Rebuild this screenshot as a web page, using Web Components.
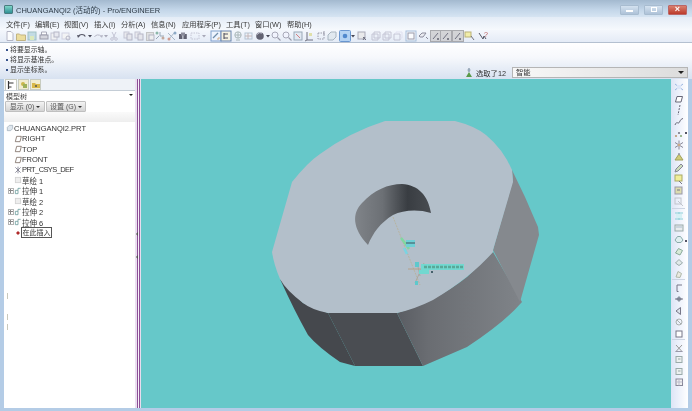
<!DOCTYPE html>
<html lang="zh">
<head>
<meta charset="utf-8">
<title>CHUANGANQI2 - Pro/ENGINEER</title>
<style>
html, body { margin: 0; height: 100%; overflow: hidden; background: #b9d1ea; }
body { font: 7.5px "Liberation Sans", "Noto Sans CJK SC", sans-serif; color: #333; }
</style>
</head>
<body>
<pe-window>
  <pe-titlebar slot="title">CHUANGANQI2 (活动的) - Pro/ENGINEER</pe-titlebar>
  <pe-menubar slot="menu" items="文件(F):29,编辑(E):29,视图(V):30,插入(I):27,分析(A):30,信息(N):31,应用程序(P):44,工具(T):29,窗口(W):32,帮助(H):30"></pe-menubar>
  <pe-toolbar slot="tools"></pe-toolbar>
  <pe-messages slot="messages">
    <div>将要显示轴。</div>
    <div>将显示基准点。</div>
    <div>显示坐标系。</div>
  </pe-messages>
  <pe-model-tree slot="tree"></pe-model-tree>
  <pe-viewport slot="view"></pe-viewport>
  <pe-side-toolbar slot="side"></pe-side-toolbar>
</pe-window>

<script>
// 12x12 toolbar glyphs, kept faint because the toolbar is mostly disabled
const ICONS = {
  file: '<path d="M3 1.5h4l2 2v7H3z" fill="#fff" stroke="#aab"/>',
  open: '<path d="M1.5 4h3l1 1h5v5.5h-9z" fill="#ecd98a" stroke="#b9a76a"/>',
  save: '<rect x="2" y="2" width="8" height="8" fill="#b9d6e0" stroke="#8fb5b8"/><rect x="4" y="6" width="4" height="4" fill="#d8e8b0"/>',
  print: '<path d="M3.5 2h5v3h-5z" fill="#fff" stroke="#99a"/><rect x="2" y="5" width="8" height="4" fill="#d0d0d8" stroke="#889"/>',
  doc2: '<rect x="2" y="3" width="6" height="7" fill="#f2f2f2" stroke="#bbc"/><rect x="5" y="2" width="5" height="5" fill="#e6e6ee" stroke="#aab"/>',
  doc3: '<rect x="2" y="3" width="7" height="6" fill="#f4f4f4" stroke="#ccd"/><circle cx="8" cy="8" r="2" fill="none" stroke="#aab"/>',
  undo: '<path d="M2.5 6.5a3.6 3 0 0 1 6.8 0" fill="none" stroke="#334" stroke-width="1.1"/><path d="M1 5l3 .5-2 2.5z" fill="#334"/>',
  redo: '<path d="M2.5 7a3.6 3 0 0 1 6.6 -.5" fill="none" stroke="#aab" stroke-width="1"/><path d="M11 5l-3 .5 2 2.5z" fill="#aab"/>',
  arrow: '<path d="M4 5h4L6 7.5z" fill="#223"/>',
  greyarrow: '<path d="M4 5h4L6 7.5z" fill="#99a"/>',
  cut: '<path d="M4 2l3 6M8 2L5 8" stroke="#bbc" fill="none"/><circle cx="4" cy="9" r="1.3" fill="none" stroke="#bbc"/><circle cx="8" cy="9" r="1.3" fill="none" stroke="#bbc"/>',
  copy: '<rect x="2" y="2" width="5" height="6" fill="#e8e8ec" stroke="#bbc"/><rect x="5" y="4" width="5" height="6" fill="#e4e4ea" stroke="#aab"/>',
  paste: '<rect x="2.5" y="2.5" width="7" height="8" fill="#ddd" stroke="#bbb"/><rect x="5" y="5" width="5" height="5" fill="#eee" stroke="#aab"/>',
  tree1: '<path d="M2 9l3-3M6 2v4l4 0" stroke="#89a" fill="none"/><circle cx="3" cy="3" r="1.5" fill="#7a9"/><circle cx="9" cy="8" r="1.5" fill="#b98"/>',
  tree2: '<path d="M2 3l7 7M9 2L3 9" stroke="#9ab" fill="none"/><circle cx="3" cy="9" r="1.5" fill="#c87"/><circle cx="9" cy="3" r="1.5" fill="#79b"/>',
  find: '<rect x="2" y="4" width="3.4" height="5" fill="#445"/><rect x="6.4" y="4" width="3.4" height="5" fill="#445"/><rect x="4" y="2.5" width="4" height="3" fill="#778"/>',
  dash: '<rect x="2" y="3" width="8" height="6" fill="none" stroke="#bbc" stroke-dasharray="1.5 1"/>',
  boxblue: '<rect x="1" y="1" width="10" height="10" fill="#eef4ff" stroke="#6a8fc4"/><path d="M3 8l5-5" stroke="#579" stroke-width="1.2"/><path d="M7 9h2V7" stroke="#c96" fill="none"/>',
  boxtree: '<rect x="1" y="1" width="10" height="10" fill="#f6f1dc" stroke="#4e6f9f"/><path d="M4 3v6M4 4h4M4 8h4" stroke="#334" stroke-width="1.1"/>',
  net: '<circle cx="6" cy="5" r="3.2" fill="none" stroke="#9aaaaa"/><path d="M3 5h6M6 2v6M4 10h4" stroke="#9aaaaa"/>',
  net2: '<rect x="2" y="3" width="7" height="6" fill="none" stroke="#abc"/><path d="M5 3v6M2 6h7" stroke="#baa"/>',
  sphere: '<circle cx="6" cy="6" r="3.8" fill="#445"/><path d="M3 4.5a4 4 0 0 1 5 -1.5" stroke="#ccd" fill="none"/>',
  zoomin: '<circle cx="5" cy="5" r="3" fill="#f2f4ff" stroke="#99a"/><path d="M7.5 7.5l3 3" stroke="#889" stroke-width="1.1"/>',
  zoombox: '<rect x="2" y="2" width="8" height="8" fill="#dfe8f2" stroke="#89a"/><path d="M4 4l4 4" stroke="#c66"/>',
  axes: '<path d="M4 2v8h6" stroke="#556" fill="none"/><path d="M4 10l-2 1" stroke="#556"/><rect x="6" y="3" width="3" height="3" fill="#dd9"/>',
  axes2: '<rect x="3" y="3" width="6" height="6" fill="none" stroke="#889" stroke-dasharray="1.5 1"/><path d="M9 1v4" stroke="#889"/>',
  solid: '<path d="M2 5l3-3h5v5l-3 3H2z" fill="#dfe7ee" stroke="#9aa8b4"/>',
  active: '<rect x=".5" y=".5" width="11" height="11" rx="1" fill="#a8ccf2" stroke="#4f84c8"/><circle cx="6" cy="6" r="2.3" fill="#2f72c4"/>',
  outline: '<rect x="2" y="2" width="7" height="7" fill="#e8e8e8" stroke="#99a"/><path d="M7 7l3 3M9 7l-2 3" stroke="#556"/>',
  wire: '<path d="M2 4h6v6H2zM4 2h6v6H4z" fill="none" stroke="#bbc"/>',
  hidden: '<path d="M2 4h6v6H2z" fill="none" stroke="#bbc"/><path d="M4 4V2h6v6H8" fill="none" stroke="#dde"/>',
  flat: '<rect x="1" y="1" width="10" height="10" fill="#f4f6fa" stroke="#98b4d4"/><rect x="3" y="3" width="6" height="6" fill="#fff" stroke="#889"/>',
  tag: '<path d="M1 6l3-3h4l-3 4H2zM8 7l2 2" stroke="#778" fill="#eaeaf0"/>',
  graybox: '<rect x=".5" y=".5" width="11" height="11" fill="#cdcdcf" stroke="#9a9a9e"/><path d="M3 9l5-6" stroke="#556"/><circle cx="8" cy="9" r="1" fill="#445"/>',
  help: '<path d="M2 3l4 6 1-3 2 3" stroke="#334" fill="none"/><text x="7" y="7" font-size="7" fill="#a33" font-family="Liberation Sans">?</text>',
  note: '<rect x="1" y="2" width="6" height="5" fill="#f2ec98" stroke="#b0a45a"/><path d="M7 6l3 4" stroke="#556"/>',
  // right hand column
  csys: '<path d="M2 9L10 3M2 3l8 6" stroke="#9ab6e0"/><rect x="4" y="4" width="4" height="4" fill="#dce6f8"/>',
  plane: '<path d="M2.5 9L4 3.5h5.5L8 9z" fill="#fff" stroke="#667"/>',
  axis: '<path d="M7 1L5 11" stroke="#667" stroke-dasharray="2 1.2"/>',
  curve: '<path d="M2 9c2-5 3 0 4.500-3s2-3 3.500-3.500" fill="none" stroke="#667"/>',
  points: '<circle cx="3" cy="9" r="1.1" fill="#b97"/><circle cx="6" cy="6" r="1.1" fill="#778"/><circle cx="8" cy="9" r="1.1" fill="#8a7"/>',
  star: '<path d="M6 1.500v9M2 3.500l8 5M10 3.500l-8 5" stroke="#889"/><circle cx="6" cy="6" r="1.300" fill="#ca8"/>',
  mount: '<path d="M2 10l4-6 4 6z" fill="#d0cc7a" stroke="#a0a05a"/><circle cx="6" cy="4" r="1.1" fill="#99a"/>',
  pencil: '<path d="M2 10l1-3 5-5 2 2-5 5z" fill="#cdb" stroke="#889"/>',
  sk1: '<rect x="2" y="2" width="7" height="6" fill="#f0ee9a" stroke="#aaaa65"/><path d="M6 8l3 3" stroke="#778"/>',
  sk2: '<rect x="2" y="2" width="7" height="7" fill="#dcdcb0" stroke="#99a"/><path d="M4 5h3" stroke="#778"/>',
  sk3: '<rect x="2" y="2" width="6" height="6" fill="none" stroke="#c0c4cc"/><path d="M5 5l5 5" stroke="#c0c4cc"/>',
  mirror: '<path d="M2 3h8M2 9h8M6 2v8" stroke="#8cd0d8"/><rect x="3" y="4" width="6" height="4" fill="#d5f0f4"/>',
  panel: '<rect x="2" y="3" width="8" height="6" fill="#e8ecee" stroke="#9aaaaa"/><path d="M3 5h6" stroke="#abc"/>',
  hex: '<path d="M2 7l2.500-3.500h3L10 7 8 9.500H4z" fill="#dfeef0" stroke="#8aaaaa"/>',
  pat1: '<path d="M2.500 8l3-4.500 4 2-2.500 4.500z" fill="#d8ead8" stroke="#8aaa9a"/>',
  pat2: '<path d="M2.500 7l3.500-3.500L9.500 7 6 9.500z" fill="#e2eaea" stroke="#9aaaaa"/>',
  pat3: '<path d="M3 9l2-5.500 3.500 2L7 9.500z" fill="#eaeae0" stroke="#b0b8aa"/>',
  bracket: '<path d="M4 9.500V3h5M4 9.500h1.500" fill="none" stroke="#778"/>',
  dia: '<path d="M6 3l3 3-3 3-3-3z" fill="#8a94a2"/><path d="M2 6h8" stroke="#778"/>',
  wedge: '<path d="M3 6l4.500-3.500v7z" fill="#dde4ec" stroke="#778"/>',
  loop: '<circle cx="6" cy="6" r="3" fill="none" stroke="#aab0b0"/><path d="M4 4l4 4" stroke="#aab0b0"/>',
  square: '<rect x="3" y="3" width="6" height="6" fill="#fff" stroke="#778"/>',
  x: '<path d="M3 3l6 6.500M9 3L3 9.500" stroke="#999"/><path d="M2.500 9.500h7" stroke="#99a"/>',
  cube: '<rect x="3" y="3.500" width="6" height="6" fill="#ecf0f0" stroke="#9aaaaa"/><path d="M5 6h2.500" stroke="#9aaaaa"/>',
  grid: '<rect x="3" y="3" width="6.500" height="6.500" fill="#f0f0f0" stroke="#889"/><path d="M3 6h6.500M6 3v6.500" stroke="#bbc"/>',
  // model tree
  tplane: '<path d="M2 10L4 2h7l-2 8z" fill="none" stroke="#7a6a60" stroke-width="1.2"/>',
  tcsys: '<path d="M2 2l8 8M10 2l-8 8M6 1v10" stroke="#778" stroke-width="1.2"/>',
  tsketch: '<rect x="2" y="2" width="8" height="8" fill="#eee" stroke="#d0d0d0" stroke-width="1.2"/>',
  textrude: '<path d="M2 10V5h4v5zM6 5V2h4" fill="none" stroke="#6a9a9a" stroke-width="1.2"/>',
  tinsert: '<path d="M6 3l3 3-3 3-3-3z" fill="#b02a2a"/>'
};

class PeIcon extends HTMLElement {
  connectedCallback() {
    const size = this.getAttribute('size') || 12;
    this.attachShadow({ mode: 'open' }).innerHTML = `
      <style>:host { display: block; width: ${size}px; height: ${size}px; flex: none; } svg { display: block; }</style>
      <svg width="${size}" height="${size}" viewBox="0 0 12 12">${ICONS[this.getAttribute('name')] || ''}</svg>`;
  }
}

class PeWindow extends HTMLElement {
  constructor() {
    super();
    this.attachShadow({ mode: 'open' }).innerHTML = `
      <style>
        :host { display: grid; width: 692px; height: 411px; box-sizing: border-box; padding-bottom: 3px; filter: blur(.35px);
          grid-template-rows: 17px 13px 13px 36px 329px; grid-template-columns: 4px 131px 6px 530px 17px 4px; background: #b4cce6; }
        ::slotted([slot=title]), ::slotted([slot=menu]), ::slotted([slot=tools]), ::slotted([slot=messages]) { grid-column: 1 / -1; }
        ::slotted([slot=tree]) { grid-column: 2; grid-row: 5; }
        ::slotted([slot=view]) { grid-column: 4; grid-row: 5; }
        ::slotted([slot=side]) { grid-column: 5; grid-row: 5; }
        .sash { grid-column: 3; grid-row: 5; position: relative;
          background: linear-gradient(90deg, #eadff0 0 2px, #8d4f97 2px 3px, #f8f2fa 3px 4px, #8d4f97 4px 5px, #e9dcee 5px); }
        .sash i { position: absolute; left: 1px; width: 0; height: 0; border: 2px solid transparent; border-right: 2px solid #555; border-left: 0; }
      </style>
      <slot name="title"></slot><slot name="menu"></slot><slot name="tools"></slot><slot name="messages"></slot>
      <slot name="tree"></slot>
      <div class="sash"><i style="top:153px"></i><i style="top:176px"></i></div>
      <slot name="view"></slot><slot name="side"></slot>`;
  }
}

class PeTitlebar extends HTMLElement {
  constructor() {
    super();
    this.attachShadow({ mode: 'open' }).innerHTML = `
      <style>
        :host { display: flex; align-items: center; height: 17px; box-sizing: border-box; padding: 2px 5px 0 4px; gap: 3px;
          background: linear-gradient(#a3b9cf, #c2d5e8 55%, #d6e4f2); font-size: 7.5px; color: #2d3a46; }
        .logo { width: 9px; height: 9px; border-radius: 1px; border: 1px solid #4a7c80; box-sizing: border-box; background: linear-gradient(#7fd6c8, #2e8f94); }
        .text { flex: 1; white-space: nowrap; }
        .btn { width: 19px; height: 10px; box-sizing: border-box; margin-left: 2px; display: flex; align-items: center; justify-content: center;
          border: 1px solid #a8bcd0; border-radius: 1px; background: linear-gradient(#d4e2f0, #aec2d8); }
        .btn b { display: block; }
        .min b { width: 7px; height: 2px; background: #fff; margin-top: 2px; }
        .max b { width: 6px; height: 5px; border: 1px solid #fff; box-sizing: border-box; }
        .close { background: linear-gradient(#d97f6e, #bb3a2a); border-color: #b66; color: #fff; font: bold 9px/1 "Liberation Sans", sans-serif; }
      </style>
      <span class="logo"></span><span class="text"><slot></slot></span>
      <span class="btn min"><b></b></span><span class="btn max"><b></b></span><span class="btn close">×</span>`;
  }
}

class PeMenubar extends HTMLElement {
  connectedCallback() {
    const items = this.getAttribute('items').split(',').map(s => s.split(':'));
    this.attachShadow({ mode: 'open' }).innerHTML = `
      <style>
        :host { display: flex; align-items: center; height: 13px; padding-left: 6px; box-sizing: border-box;
          background: linear-gradient(#e4ecf6, #f6f9fd); font-size: 7.3px; color: #3a3a3a; white-space: nowrap; }
      </style>
      ${items.map(([t, w]) => `<span style="width:${w}px">${t}</span>`).join('')}`;
  }
}

class PeToolbar extends HTMLElement {
  connectedCallback() {
    // icon name + centre x of the icon in the window
    const tools = [['file',10],['open',21],['save',32],['print',44],['doc2',55],['doc3',66],['undo',82],['arrow',90],['redo',98],['greyarrow',106],
      ['cut',114],['copy',128],['copy',139],['paste',150],['tree1',160],['tree2',172],['find',183],['dash',195],['greyarrow',204],['boxblue',216],
      ['boxtree',226],['net',238],['net2',249],['sphere',260],['arrow',268],['zoomin',276],['zoomin',287],['zoombox',298],['axes',309],['axes2',321],
      ['solid',332],['active',345],['arrow',353],['outline',362],['wire',376],['wire',387],['hidden',398],['flat',411],['tag',424],['graybox',436],
      ['graybox',446],['graybox',458],['note',470],['help',483]];
    let prev = 0;
    const html = tools.map(([name, x]) => {
      const gap = x - 6 - prev;
      prev = x + 6;
      return `<pe-icon name="${name}" style="margin-left:${gap}px"></pe-icon>`;
    }).join('');
    this.attachShadow({ mode: 'open' }).innerHTML = `
      <style>
        :host { display: flex; align-items: center; height: 13px; box-sizing: border-box; border-bottom: 1px solid #b4c0d0;
          background: linear-gradient(#f4f7fc, #e4ebf6); }
        .row { display: flex; opacity: .82; }
      </style>
      <div class="row">${html}</div>`;
  }
}

class PeMessages extends HTMLElement {
  constructor() {
    super();
    this.attachShadow({ mode: 'open' }).innerHTML = `
      <style>
        :host { display: flex; justify-content: space-between; height: 36px; box-sizing: border-box; padding: 1px 4px 1px 5px;
          background: linear-gradient(#fff, #f6f8fc 40%, #d8e2f1); font-size: 6.9px; color: #333; }
        .list { line-height: 10px; padding-top: 1px; }
        ::slotted(div) { padding-left: 5px; position: relative; }
        ::slotted(div)::before { content: ""; position: absolute; left: 1px; top: 4px; width: 2px; height: 2px; background: #36528a; }
        .select { align-self: flex-end; display: flex; align-items: center; gap: 3px; height: 11px; font-size: 7.3px; }
        .flag { width: 8px; height: 11px; }
        .count { width: 33px; white-space: nowrap; }
        .combo { width: 176px; height: 11px; box-sizing: border-box; border: 1px solid #b5b5b5; padding: 0 3px; line-height: 9px;
          background: linear-gradient(90deg, #f8f8f8, #dcdcdc); display: flex; justify-content: space-between; align-items: center; }
        .combo i { width: 0; height: 0; border: 3px solid transparent; border-top: 3px solid #222; border-bottom: 0; }
      </style>
      <div class="list"><slot></slot></div>
      <div class="select">
        <svg class="flag" viewBox="0 0 8 11"><path d="M4 1v4" stroke="#789"/><circle cx="4" cy="3" r="1.5" fill="#9ab"/><path d="M1 10l3-5 3 5z" fill="#5a9a4a"/></svg>
        <span class="count">选取了12</span>
        <span class="combo"><span>智能</span><i></i></span>
      </div>`;
  }
}

class PeTreeItem extends HTMLElement {
  connectedCallback() {
    const exp = this.hasAttribute('expand');
    const insert = this.hasAttribute('insert');
    this.attachShadow({ mode: 'open' }).innerHTML = `
      <style>
        :host { display: flex; align-items: center; height: 10.45px; padding-left: 4px; white-space: nowrap; font-size: 7.5px; color: #333; }
        .plus { width: 6px; height: 6px; box-sizing: border-box; border: 1px solid #b4b4b4; flex: none; position: relative; visibility: ${exp ? 'visible' : 'hidden'}; }
        .plus::before { content: ""; position: absolute; left: 0; top: 1px; width: 4px; height: 1px; background: #888; }
        .plus::after { content: ""; position: absolute; left: 1px; top: 0; width: 1px; height: 4px; background: #888; }
        .label { ${insert ? 'border: 1px solid #555; padding: 0 .5px; line-height: 9px; margin-left: -1px; font-size: 7px;' : ''} }
      </style>
      <span class="plus"></span>
      <pe-icon name="${this.getAttribute('icon')}" size="8"></pe-icon>
      <span class="label"><slot></slot></span>`;
  }
}

class PeModelTree extends HTMLElement {
  constructor() {
    super();
    this.attachShadow({ mode: 'open' }).innerHTML = `
      <style>
        :host { display: flex; flex-direction: column; background: #fff; font-size: 7.5px; color: #444; overflow: hidden; position: relative; }
        .tabs { display: flex; height: 12px; box-sizing: border-box; padding-left: 1px; gap: 1px; border-bottom: 1px solid #c4cdd6; background: #eef2f7; }
        .tab { width: 11px; height: 11px; background: #f1ecd0; border: 1px solid #c8ccc0; box-sizing: border-box; display: flex; align-items: center; justify-content: center; }
        .tab.on { background: #fff; border-bottom: 0; width: 12px; }
        .head { display: flex; justify-content: space-between; padding: 1px 2px 0 2px; height: 9px; line-height: 10px; font-size: 7px; }
        .head i { width: 0; height: 0; margin-top: 2px; border: 2px solid transparent; border-top: 2px solid #222; border-bottom: 0; }
        .btns { display: flex; gap: 1px; padding: 0 1px; height: 11px; }
        .b { width: 40px; box-sizing: border-box; border: 1px solid #c0c0c0; border-radius: 1px; background: linear-gradient(#f4f4f4, #d4d4d4);
          display: flex; align-items: center; justify-content: center; gap: 2px; font-size: 7px; color: #555; line-height: 9px; white-space: nowrap; }
        .b i { width: 0; height: 0; border: 2px solid transparent; border-top: 2px solid #333; border-bottom: 0; margin-top: 1px; }
        .strip { height: 10px; background: linear-gradient(#fafafa, #eeeeee); }
        .tree { padding-top: 1px; }
        .root { display: flex; align-items: center; height: 10.45px; padding-left: 2px; font-size: 7.5px; color: #333; }
        .marks i { position: absolute; left: 3px; width: 1px; background: #c8c8bc; }
      </style>
      <div class="tabs">
        <span class="tab on"><svg width="8" height="8" viewBox="0 0 8 8"><path d="M1.5 0v8M1.5 2h5M1.5 6h3" stroke="#333" stroke-width="1.2"/></svg></span>
        <span class="tab"><svg width="8" height="8" viewBox="0 0 8 8"><circle cx="3" cy="3" r="2" fill="#cbb84a"/><rect x="3" y="3" width="4" height="4" fill="#9db05a"/></svg></span>
        <span class="tab"><svg width="8" height="8" viewBox="0 0 8 8"><path d="M0 2h3l1 1h4v4H0z" fill="#d8b84a"/><circle cx="4" cy="5" r="1" fill="#555"/></svg></span>
      </div>
      <div class="head"><span>模型树</span><i></i></div>
      <div class="btns"><span class="b">显示 (0)<i></i></span><span class="b">设置 (G)<i></i></span></div>
      <div class="strip"></div>
      <div class="tree">
        <div class="root"><pe-icon name="solid" size="8"></pe-icon>CHUANGANQI2.PRT</div>
        <pe-tree-item icon="tplane">RIGHT</pe-tree-item>
        <pe-tree-item icon="tplane">TOP</pe-tree-item>
        <pe-tree-item icon="tplane">FRONT</pe-tree-item>
        <pe-tree-item icon="tcsys" style="letter-spacing:-.6px">PRT_CSYS_DEF</pe-tree-item>
        <pe-tree-item icon="tsketch">草绘 1</pe-tree-item>
        <pe-tree-item icon="textrude" expand>拉伸 1</pe-tree-item>
        <pe-tree-item icon="tsketch">草绘 2</pe-tree-item>
        <pe-tree-item icon="textrude" expand>拉伸 2</pe-tree-item>
        <pe-tree-item icon="textrude" expand>拉伸 6</pe-tree-item>
        <pe-tree-item icon="tinsert" insert>在此插入</pe-tree-item>
      </div>
      <div class="marks"><i style="top:214px;height:6px"></i><i style="top:235px;height:6px"></i><i style="top:245px;height:6px"></i></div>`;
  }
}

class PeViewport extends HTMLElement {
  constructor() {
    super();
    // coordinates below are window coordinates, the viewBox shifts them into the viewport
    this.attachShadow({ mode: 'open' }).innerHTML = `
      <style>:host { display: block; background: #66c8c9; overflow: hidden; } svg { display: block; }</style>
      <svg width="530" height="329" viewBox="141 79 530 329">
        <defs>
          <linearGradient id="side" gradientUnits="userSpaceOnUse" x1="398" y1="0" x2="520" y2="0">
            <stop offset="0" stop-color="#5a5d63"/><stop offset=".25" stop-color="#6a6d72"/><stop offset="1" stop-color="#7f8388"/>
          </linearGradient>
          <linearGradient id="bore" gradientUnits="userSpaceOnUse" x1="356" y1="0" x2="432" y2="0">
            <stop offset="0" stop-color="#7f8388"/><stop offset=".35" stop-color="#6c7075"/><stop offset=".68" stop-color="#393d42"/><stop offset="1" stop-color="#494d52"/>
          </linearGradient>
        </defs>
        <path d="M280 279L303 303L328 313L355 366L340 362Q318 347 308 335Q294 310 280 279Z" fill="#45484d"/>
        <path d="M328 313H397L423 366H355Z" fill="#4a4d52"/>
        <path d="M397 313Q435 302 467 277L493 252L522 302Q505 322 467 347L423 366Z" fill="url(#side)"/>
        <path d="M493 250L513 180L512 170L525 197L538 227L539 235L520 302Z" fill="#85898e"/>
        <path d="M385 121H455Q475 126 486 135Q503 149 512 170L513 182L493 250L493 252Q470 278 433 300Q415 309 397 313H328Q312 310 303 303Q286 290 280 279Q274 265 272 252L292 182Q308 162 320 154Q350 132 385 121Z" fill="#b3bfca"/>
        <path d="M368 245C352 228 352 213 362 203C374 190 388 184 402 184C418 185 428 195 431 213C418 209 403 210 393 215C380 223 373 233 368 245Z" fill="url(#bore)"/>
        <path d="M393 217L420 285" stroke="#b8b096" stroke-width=".8" stroke-dasharray="2 1"/>
        <path d="M401 238L405 243L409 249" stroke="#7fd8a0" stroke-width="2.5" fill="none"/>
        <rect x="406" y="240" width="9" height="7" fill="#6fd0d6"/>
        <path d="M406 243h9" stroke="#40505a"/>
        <path d="M404 248l3 6" stroke="#7ad4e2" stroke-width="2.5"/>
        <path d="M408 269h20" stroke="#b89a78" stroke-width=".8"/>
        <path d="M417 262L420 276M424 263L415 283" stroke="#a8a294" stroke-width=".8"/>
        <rect x="415" y="262" width="4" height="5" fill="#5ec8cc"/>
        <rect x="415" y="281" width="3" height="4" fill="#5ec8cc"/>
        <rect x="421" y="264" width="43" height="6" fill="#72d8d0"/>
        <rect x="419" y="270" width="10" height="4" fill="#72d8d0"/>
        <path d="M424 267h40" stroke="#5aa898" stroke-width="2.5" stroke-dasharray="3 1"/>
        <path d="M431 272h2" stroke="#44606a" stroke-width="2"/>
      </svg>`;
  }
}

class PeSideToolbar extends HTMLElement {
  connectedCallback() {
    const tools = ['csys','plane','axis','curve','points','star','mount','pencil','sk1','sk2','sk3','|','mirror','panel','hex','pat1','pat2','pat3','|','bracket','dia','wedge','loop','square','|','x','cube','cube','grid'];
    this.attachShadow({ mode: 'open' }).innerHTML = `
      <style>
        :host { display: flex; flex-direction: column; align-items: center; padding: 2px 2px 0 0; box-sizing: border-box;
          background: linear-gradient(90deg, #dde5f6, #eef2fb 50%, #fff); position: relative; }
        pe-icon { margin-bottom: -.5px; flex: none; }
        hr { width: 13px; margin: 0 0 1.5px; border: 0; border-top: 1px solid #ccd4e2; flex: none; }
        i { position: absolute; right: 1px; width: 2px; height: 2px; background: #556; }
      </style>
      ${tools.map(t => t === '|' ? '<hr>' : `<pe-icon name="${t}"></pe-icon>`).join('')}
      <i style="top:53px"></i><i style="top:161px"></i>`;
  }
}

customElements.define('pe-icon', PeIcon);
customElements.define('pe-window', PeWindow);
customElements.define('pe-titlebar', PeTitlebar);
customElements.define('pe-menubar', PeMenubar);
customElements.define('pe-toolbar', PeToolbar);
customElements.define('pe-messages', PeMessages);
customElements.define('pe-tree-item', PeTreeItem);
customElements.define('pe-model-tree', PeModelTree);
customElements.define('pe-viewport', PeViewport);
customElements.define('pe-side-toolbar', PeSideToolbar);
</script>
</body>
</html>
